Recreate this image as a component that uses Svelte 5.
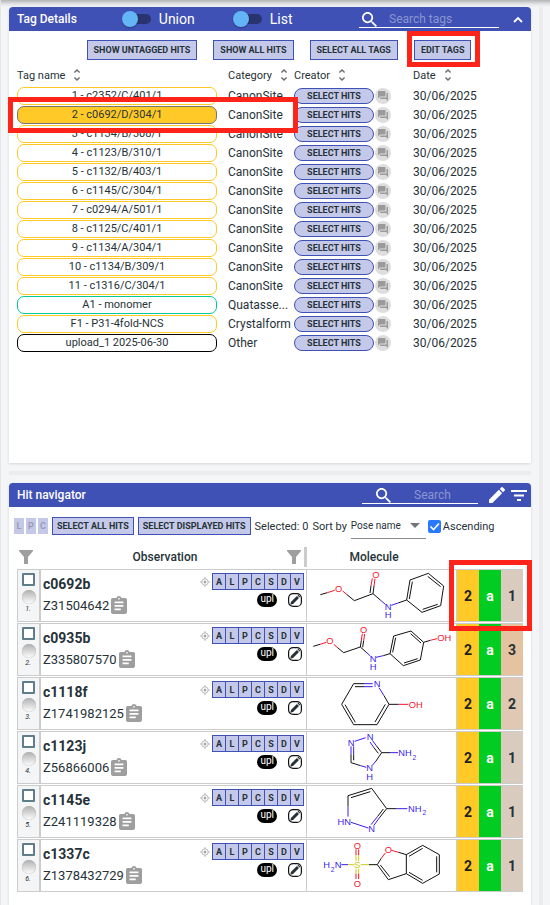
<script>
  const tags = [
    ['1 - c2352/C/401/1', 'CanonSite', 'gold'],
    ['2 - c0692/D/304/1', 'CanonSite', 'active'],
    ['3 - c1134/B/308/1', 'CanonSite', 'gold'],
    ['4 - c1123/B/310/1', 'CanonSite', 'gold'],
    ['5 - c1132/B/403/1', 'CanonSite', 'gold'],
    ['6 - c1145/C/304/1', 'CanonSite', 'gold'],
    ['7 - c0294/A/501/1', 'CanonSite', 'gold'],
    ['8 - c1125/C/401/1', 'CanonSite', 'gold'],
    ['9 - c1134/A/304/1', 'CanonSite', 'gold'],
    ['10 - c1134/B/309/1', 'CanonSite', 'gold'],
    ['11 - c1316/C/304/1', 'CanonSite', 'gold'],
    ['A1 - monomer', 'Quatasse...', 'green'],
    ['F1 - P31-4fold-NCS', 'Crystalform', 'gold'],
    ['upload_1 2025-06-30', 'Other', 'dark']
  ];
  const columns = ['Tag name', 'Category', 'Creator', 'Date'];
  const letters = ['A', 'L', 'P', 'C', 'S', 'D', 'V'];

  const K = '#111', R = '#f5142d', B = '#3a1cf0', Y = '#cccc1a';
  // bonds: [colour, path]; atoms: [x, baseline, label, colour, size]
  const hits = [
    {
      name: 'c0692b', id: 'Z31504642', count: 1, tone: 'tan1', box: '24 33 444 150',
      bonds: [
        [K, 'M61 104L82 98M141 104L163 122L219 101L242 121M219 101L222 78M210 99L213 77'],
        [R, 'M82 98L104 91M128 93L141 104M222 78L225 56M213 77L217 55'],
        [B, 'M242 121L256 133M274 136L297 128'],
        [K, 'M297 128L320 120L330 60L385 40L431 78L422 137L366 157L320 120M328 117L337 65M383 49L422 80M413 133L368 148']
      ],
      atoms: [[116, 96, 'O', R], [228, 54, 'O', R], [264, 149, 'N', B], [264, 174, 'H', B]]
    },
    {
      name: 'c0935b', id: 'Z335807570', count: 3, tone: 'tan3', box: '24 195 444 150',
      bonds: [
        [K, 'M40 259L60 253M114 264L131 278L181 261L198 276M181 261L184 241M188 262L191 242'],
        [R, 'M60 253L79 247M101 253L114 264M184 241L187 221M191 242L194 222'],
        [B, 'M198 276L211 288M228 292L250 287'],
        [K, 'M250 287L270 281L281 228L333 213L371 247L361 300L310 317L270 281M278 277L287 233M332 221L363 249M353 296L312 309M371 247L391 241'],
        [R, 'M391 241L411 236']
      ],
      atoms: [[90, 253, 'O', R], [191, 220, 'O', R], [219, 305, 'N', B], [219, 330, 'H', B], [433, 243, 'OH', R]]
    },
    {
      name: 'c1118f', id: 'Z1741982125', count: 2, tone: 'tan2', box: '24 12 444 150',
      bonds: [
        [K, 'M161 26L192 26M165 35L192 35M161 26L125 88L161 149L231 149L267 88L252 62M135 89L166 142M225 141L256 88M267 88L296 88'],
        [B, 'M192 26L218 26M192 35L218 35M252 62L237 38'],
        [R, 'M296 88L325 88']
      ],
      atoms: [[231, 36, 'N', B], [347, 98, 'OH', R]]
    },
    {
      name: 'c1123j', id: 'Z56866006', count: 1, tone: 'tan1', box: '24 174 444 150',
      bonds: [
        [K, 'M153 238L153 263L182 272M161 238L161 256M229 212L245 233L228 258M221 217L235 235M245 233L270 233'],
        [B, 'M153 238L153 214M161 238L161 214M164 199L197 188M229 212L217 196M221 217L210 201M182 272L199 277M228 258L217 271M270 233L294 233']
      ],
      atoms: [[153, 213, 'N', B], [210, 196, 'N', B], [209, 289, 'N', B], [209, 314, 'H', B], [315, 243, 'NH', B], [343, 254, '2', B, 20]]
    },
    {
      name: 'c1145e', id: 'Z241119328', count: 1, tone: 'tan1', box: '24 21 444 150',
      bonds: [
        [K, 'M144 79L144 47L215 25L260 86L240 111M153 53L211 35M250 87L233 109M260 86L290 86'],
        [B, 'M144 79L144 110M153 127L205 144M240 111L221 137M233 109L213 134M290 86L322 86']
      ],
      atoms: [[133, 134, 'HN', B], [215, 157, 'N', B], [344, 96, 'NH', B], [373, 106, '2', B, 20]]
    },
    {
      name: 'c1337c', id: 'Z1378432729', count: 1, tone: 'tan1', box: '24 183 444 150',
      bonds: [
        [B, 'M124 254L144 254'],
        [Y, 'M144 254L163 254M182 254L207 254M168 243L168 225M176 243L176 225M168 266L168 281M176 266L176 281'],
        [R, 'M168 225L168 208M176 225L176 208M168 281L168 297M176 281L176 297M243 236L256 219M274 211L296 217'],
        [K, 'M207 254L232 254L243 236M232 254L265 299L319 281L319 224L296 217M241 255L269 290M319 224L368 196L418 224L418 282L368 310L319 281M327 229L368 205M410 229L410 277M368 301L327 277']
      ],
      atoms: [[80, 264, 'H', B], [98, 275, '2', B, 20], [114, 264, 'N', B], [172, 264, 'S', Y], [172, 207, 'O', R], [172, 321, 'O', R], [265, 219, 'O', R]]
    }
  ];
</script>

{#snippet searchIcon()}
  <svg class="magnifier" viewBox="3 3 17.5 17.5" aria-hidden="true"><path d="M15.5 14h-.79l-.28-.27C15.41 12.59 16 11.11 16 9.5 16 5.91 13.09 3 9.5 3S3 5.91 3 9.5 5.91 16 9.5 16c1.61 0 3.09-.59 4.23-1.57l.27.28v.79l5 4.99L20.49 19l-4.99-5zm-6 0C7.01 14 5 11.99 5 9.5S7.01 5 9.5 5 14 7.01 14 9.5 11.99 14 9.5 14z" /></svg>
{/snippet}

{#snippet funnel()}
  <svg class="funnel" viewBox="0 0 14 14" aria-hidden="true"><path d="M0 0h14v1L9 7v7H5V7L0 1z" /></svg>
{/snippet}

<div class="page">
  <main>
    <section class="panel tags-panel">
      <header>
        <h2>Tag Details</h2>
        <label class="switch first"><input type="checkbox" /><span class="track"></span>Union</label>
        <label class="switch second"><input type="checkbox" /><span class="track"></span>List</label>
        <label class="search wide">{@render searchIcon()}<input type="text" placeholder="Search tags" aria-label="Search tags" /></label>
        <button class="icon collapse" aria-label="Collapse"><svg width="10" height="7" viewBox="0 0 10 7"><path d="M1 6l4-4 4 4" fill="none" stroke="#fff" stroke-width="1.8" /></svg></button>
      </header>
      <div class="actions">
        <button class="action">Show untagged hits</button>
        <button class="action">Show all hits</button>
        <button class="action">Select all tags</button>
        <span class="marked"><button class="action">Edit tags</button><i class="frame frame-edit"></i></span>
      </div>
      <table class="tags">
        <colgroup><col class="c-name" /><col class="c-cat" /><col class="c-creator" /><col /></colgroup>
        <thead>
          <tr>
            {#each columns as column}
              <th><span class="sortable">{column}<svg viewBox="0 0 24 24" aria-hidden="true"><path d="M12 5.83L15.17 9l1.41-1.41L12 3 7.41 7.59 8.83 9 12 5.83zm0 12.34L8.83 15l-1.41 1.41L12 21l4.59-4.59L15.17 15 12 18.17z" /></svg></span></th>
            {/each}
          </tr>
        </thead>
        <tbody>
          {#each tags as [name, category, kind]}
            <tr>
              <td>
                <button class="pill {kind}">{name}</button>
                {#if kind === 'active'}<i class="frame frame-tag"></i>{/if}
              </td>
              <td>{category}</td>
              <td>
                <div class="creator">
                  <button class="select-hits">Select hits</button>
                  <button class="chat" aria-label="Discussion"><svg viewBox="0 0 24 24"><path d="M21 6h-2v9H6v2c0 .55.45 1 1 1h11l4 4V7c0-.55-.45-1-1-1zm-4 6V3c0-.55-.45-1-1-1H3c-.55 0-1 .45-1 1v14l4-4h10c.55 0 1-.45 1-1z" /></svg></button>
                </div>
              </td>
              <td class="date">30/06/2025</td>
            </tr>
          {/each}
        </tbody>
      </table>
    </section>

    <div class="splitter"></div>

    <section class="panel hits-panel">
      <header>
        <h2>Hit navigator</h2>
        <label class="search narrow">{@render searchIcon()}<input type="text" placeholder="Search" aria-label="Search hits" /></label>
        <button class="icon" aria-label="Edit"><svg width="16" height="16" viewBox="3 3 18 18"><path fill="#fff" d="M3 17.25V21h3.75L17.81 9.94l-3.75-3.75L3 17.25zM20.71 7.04c.39-.39.39-1.02 0-1.41l-2.34-2.34c-.39-.39-1.02-.39-1.41 0l-1.83 1.83 3.75 3.75 1.83-1.83z" /></svg></button>
        <button class="icon filter" aria-label="Filter"><svg width="16" height="11" viewBox="0 0 16 11"><path fill="#fff" d="M0 0h16v2H0zM3 4.500h10v2H3zM6 9h4v2H6z" /></svg></button>
      </header>
      <div class="toolbar">
        <div class="lpc"><button disabled>L</button><button disabled>P</button><button disabled>C</button></div>
        <button class="action small">Select all hits</button>
        <button class="action small">Select displayed hits</button>
        <span class="selected">Selected: 0</span>
        <label class="sort">Sort by <select><option>Pose name</option></select></label>
        <label class="ascending"><input type="checkbox" checked /><svg viewBox="0 0 13 13" aria-hidden="true"><path d="M2.500 6.500l3 3 5.500-6" fill="none" stroke="#fff" stroke-width="1.600" /></svg>Ascending</label>
      </div>
      <div class="hits-wrap">
        <table class="hits">
          <colgroup><col class="h-check" /><col class="h-obs" /><col /><col class="h-num" /><col class="h-num" /><col class="h-num" /></colgroup>
          <thead>
            <tr>
              <th>{@render funnel()}</th>
              <th><div class="obs-head"><span>Observation</span>{@render funnel()}<i></i></div></th>
              <th class="mol-head">Molecule</th>
              <th colspan="3"></th>
            </tr>
          </thead>
          <tbody>
            {#each hits as hit, i}
              <tr>
                <td class="check">
                  <input type="checkbox" aria-label="Select {hit.name}" />
                  <span class="knob"></span>
                  <small>{i + 1}.</small>
                </td>
                <td class="obs">
                  <div class="obs-grid">
                    <div class="names">
                      <strong>{hit.name}</strong>
                      <div class="code">{hit.id}<button class="icon" aria-label="Copy {hit.id}"><svg width="16" height="18" viewBox="3 1 18 20"><path fill="#9e9e9e" d="M19 3h-4.180C14.400 1.840 13.300 1 12 1c-1.300 0-2.400.84-2.820 2H5c-1.100 0-2 .9-2 2v14c0 1.100.9 2 2 2h14c1.100 0 2-.9 2-2V5c0-1.100-.9-2-2-2zm-7 0c.55 0 1 .45 1 1s-.45 1-1 1-1-.45-1-1 .45-1 1-1zm2 14H7v-2h7v2zm3-4H7v-2h10v2zm0-4H7V7h10v2z" /></svg></button></div>
                    </div>
                    <div class="tools">
                      <div class="line">
                        <svg class="target" viewBox="0 0 10 10" aria-hidden="true"><circle cx="5" cy="5" r="3.200" fill="none" stroke="#aaa" stroke-width=".8" /><circle cx="5" cy="5" r="1.500" fill="#aaa" /><path d="M5 0v2M5 8v2M0 5h2M8 5h2" stroke="#aaa" stroke-width=".8" /></svg>
                        <div class="letters">{#each letters as l}<button>{l}</button>{/each}</div>
                      </div>
                      <div class="line second-line">
                        <span class="upl">upl</span>
                        <button class="icon" aria-label="Edit tags of {hit.name}"><svg width="14" height="14" viewBox="0 0 14 14"><rect x=".6" y=".6" width="12.800" height="12.800" rx="4.500" fill="#fff" stroke="#111" stroke-width="1.200" /><path d="M2.300 11.700l.6-2.700 6-6 2.100 2.100-6 6zM9.500 2.400l.8-.8 2.100 2.100-.8.800z" fill="#263238" /></svg></button>
                      </div>
                    </div>
                  </div>
                </td>
                <td class="mol">
                  <svg width="148" height="50" viewBox={hit.box} role="img" aria-label="Structure of {hit.name}">
                    {#each hit.bonds as [color, d]}<path {d} stroke={color} />{/each}
                    {#each hit.atoms as [x, y, label, color, size]}<text {x} {y} fill={color} font-size={size ?? 28}>{label}</text>{/each}
                  </svg>
                </td>
                <td class="num gold-cell">2{#if i === 0}<i class="frame frame-num"></i>{/if}</td>
                <td class="num green-cell">a</td>
                <td class="num {hit.tone}">{hit.count}</td>
              </tr>
            {/each}
          </tbody>
        </table>
      </div>
    </section>
  </main>
  <div class="gutter"></div>
</div>

<style>
  :global(body) { background: #f4f5f7; }
  .page {
    display: flex;
    min-height: 100vh;
    box-sizing: border-box;
    padding: 7px 7px 0 8px;
    gap: 8px;
    border-left: 1px solid #e4e5e7;
    background: linear-gradient(#b4b4b5, #e2e3e4 4px, #f4f5f7 7px);
    font-family: Roboto, "Liberation Sans", sans-serif;
    font-size: 12px;
    color: #263238;
    overflow: hidden;
  }
  main { flex: 1; min-width: 0; display: flex; flex-direction: column; gap: 8px; }
  .gutter { width: 4px; background: #ececee; }
  .splitter { height: 4px; background: #ececee; }
  button, input, select { font: inherit; color: inherit; margin: 0; padding: 0; box-sizing: border-box; }
  button { cursor: pointer; }
  .icon { border: 0; background: none; display: flex; }
  .panel { background: #fff; border-radius: 4px 4px 0 0; box-shadow: 0 1px 3px rgba(0, 0, 0, .12); }
  .tags-panel { min-height: 456px; }
  .hits-panel { flex: 1; }
  header {
    display: flex;
    align-items: center;
    height: 24px;
    padding: 0 8px;
    background: #3f51b5;
    color: #fff;
    border-radius: 4px 4px 0 0;
  }
  h2 { margin: 0; font-size: 12px; font-weight: 500; line-height: 24px; }

  .switch { display: flex; align-items: center; gap: 8px; font-size: 14px; }
  .switch.first { margin-left: 45px; }
  .switch.second { margin-left: 38px; }
  .switch input { position: absolute; opacity: 0; }
  .track { width: 29px; height: 10px; border-radius: 5px; background: #29346f; display: flex; align-items: center; }
  .track::before { content: ""; width: 16px; height: 16px; flex: none; border-radius: 50%; background: #64b5f6; box-shadow: 0 1px 2px rgba(0, 0, 0, .3); }
  .search { display: flex; align-items: center; height: 16px; margin-top: 1px; border-bottom: 1px solid #fff; margin-left: auto; }
  .search input { flex: 1; min-width: 0; border: 0; background: none; outline: 0; color: #fff; line-height: 16px; }
  .search input::placeholder { color: #8b96d2; opacity: 1; }
  .wide { width: 140px; padding-left: 3px; gap: 12px; box-sizing: border-box; }
  .narrow { width: 116px; padding-left: 14px; gap: 23px; box-sizing: border-box; margin-right: 11px; }
  .magnifier { width: 15px; height: 15px; flex: none; fill: #fff; }
  .collapse { margin-left: 14px; }
  .filter { margin-left: 6px; margin-right: -4px; }

  .actions { display: flex; justify-content: center; gap: 16px; padding: 9px 0 0 18px; }
  .action {
    height: 20px;
    padding: 0 6px;
    border: 1px solid #3f51b5;
    background: #c5c9e9;
    font-size: 9px;
    font-weight: 700;
    line-height: 16px;
    text-transform: uppercase;
    white-space: nowrap;
  }
  .marked { position: relative; display: flex; }
  .frame { position: absolute; box-sizing: border-box; border: 5px solid #ff2419; pointer-events: none; z-index: 2; }
  .frame-edit { inset: -9px -9px -7px -7px; }
  .frame-tag { left: -9px; top: -8px; width: 290px; height: 36px; }
  .frame-num { left: -8px; top: -10px; width: 83px; height: 71px; }

  .tags { table-layout: fixed; border-collapse: collapse; margin: 6px 8px 0; width: calc(100% - 16px); }
  .c-name { width: 211px; }
  .c-cat { width: 66px; }
  .c-creator { width: 119px; }
  .tags th { padding: 0; height: 20px; text-align: left; font-size: 11px; font-weight: 400; vertical-align: top; }
  .sortable { display: flex; align-items: center; gap: 4px; height: 18px; white-space: nowrap; }
  .sortable svg { width: 16px; height: 16px; flex: none; fill: #6b6b6b; }
  .tags td { padding: 0; height: 19px; line-height: 18px; position: relative; white-space: nowrap; }
  .pill { display: block; width: 200px; height: 18px; border: 1px solid #ffca28; border-radius: 7px; background: #fff; color: #263238; font-size: 11px; line-height: 14px; }
  .pill.active { background: #ffca28; border-color: #757575; }
  .pill.green { border-color: #00c896; }
  .pill.dark { border-color: #000; }
  .creator { display: flex; align-items: center; gap: 1px; height: 18px; }
  .select-hits { width: 80px; height: 16px; border: 1px solid #3f51b5; border-radius: 8px; background: #c5c9e9; font-size: 9px; font-weight: 700; line-height: 12px; text-transform: uppercase; }
  .chat { width: 16px; height: 16px; border: 0; border-radius: 50%; background: #dedede; display: flex; align-items: center; justify-content: center; }
  .chat svg { width: 12px; height: 12px; fill: #9a9a9a; flex: none; }

  .toolbar { display: flex; align-items: center; height: 38px; padding-left: 5px; font-size: 11px; white-space: nowrap; }
  .lpc { display: flex; gap: 2px; margin-right: 4px; }
  .lpc button { width: 10px; height: 16px; border: 0; background: #c5c9e9; color: #9a9db5; font-size: 9px; font-weight: 700; }
  .small { height: 18px; padding: 0 4px; margin-right: 4px; line-height: 14px; }
  .selected { margin-right: 4px; }
  .sort { position: relative; display: flex; align-items: center; gap: 4px; }
  .sort select {
    width: 75px;
    height: 26px;
    border: 0;
    border-bottom: 1px solid #8a8a8a;
    border-radius: 0;
    appearance: none;
    background: none;
    font-size: 10px;
  }
  .sort::after { content: ""; position: absolute; right: 6px; top: 10px; border: 5px solid transparent; border-top: 5px solid #757575; border-bottom: 0; pointer-events: none; }
  .ascending { position: relative; display: flex; align-items: center; gap: 2px; margin-left: 2px; }
  .ascending input { appearance: none; width: 13px; height: 13px; border-radius: 2px; background: #2979ff; }
  .ascending svg { position: absolute; left: 0; width: 13px; height: 13px; pointer-events: none; }

  .hits-wrap { padding: 0 8px; }
  .hits { table-layout: fixed; width: 100%; border-collapse: separate; border-spacing: 0 1px; }
  .h-check { width: 24px; }
  .h-obs { width: 265px; }
  .h-num { width: 22px; }
  .hits th { padding: 0; height: 22px; font-size: 12px; font-weight: 500; line-height: 22px; text-align: center; }
  .funnel { display: block; width: 14px; height: 14px; fill: #9e9e9e; margin-left: 2px; flex: none; }
  .obs-head { display: flex; align-items: center; height: 22px; }
  .obs-head span { flex: 1; padding-left: 4px; }
  .obs-head i { width: 3px; height: 20px; background: #ccc; margin-left: 3px; margin-right: -1px; }
  .hits .mol-head { padding-right: 15px; }
  .hits td { box-sizing: border-box; height: 53px; padding: 0; border: 1px solid #ccc; border-width: 1px 0; }
  .hits .check { padding-top: 3px; vertical-align: top; background: #f4f5f7; border-left-width: 1px; border-right-width: 2px; text-align: center; }
  .check input { display: block; appearance: none; width: 13px; height: 13px; margin: 0 auto 4px 4px; border: 2px solid #607d8b; border-radius: 1px; background: #fff; }
  .knob { display: block; width: 14px; height: 14px; margin-left: 4px; border-radius: 50%; background: linear-gradient(#b0b0b0, #fff); box-shadow: inset 0 0 1px #999; }
  .check small { display: block; height: 10px; padding-right: 1px; font-size: 7px; font-style: italic; line-height: 10px; }
  .obs-grid { display: flex; justify-content: space-between; height: 51px; padding: 0 2px; box-sizing: border-box; }
  .names { padding-top: 4px; }
  .names strong { display: block; font-size: 14px; line-height: 20px; font-weight: 700; }
  .code { display: flex; align-items: center; gap: 2px; height: 22px; font-size: 13px; }
  .tools { padding-top: 3px; }
  .line { display: flex; align-items: center; justify-content: flex-end; gap: 2px; }
  .target { width: 10px; height: 10px; }
  .letters { display: flex; border: 1px solid #3f51b5; border-right: 0; }
  .letters button { width: 13px; height: 15px; border: 0; border-right: 1px solid #3f51b5; background: #c5c9e9; font-size: 9px; font-weight: 700; line-height: 14px; }
  .second-line { margin-top: 3px; padding-right: 2px; gap: 11px; }
  .upl { height: 14px; padding: 0 3px; border-radius: 7px; background: #000; color: #fff; font-size: 10px; line-height: 12px; }
  .hits .mol { border-left-width: 1px; border-right-width: 1px; text-align: center; }
  .mol svg { display: block; margin: 0 auto; overflow: visible; }
  .mol path { fill: none; stroke-width: 3; stroke-linejoin: round; }
  .mol text { font-family: "Liberation Sans", Arial, sans-serif; text-anchor: middle; }
  .num { position: relative; text-align: center; font-size: 14px; font-weight: 700; }
  .gold-cell { background: #ffca28; color: #222; }
  .green-cell { background: #00cc22; color: #fff; }
  .tan1 { background: #d9ccbf; }
  .tan2 { background: #e0c8b2; }
  .tan3 { background: #e5c3a1; }
</style>
